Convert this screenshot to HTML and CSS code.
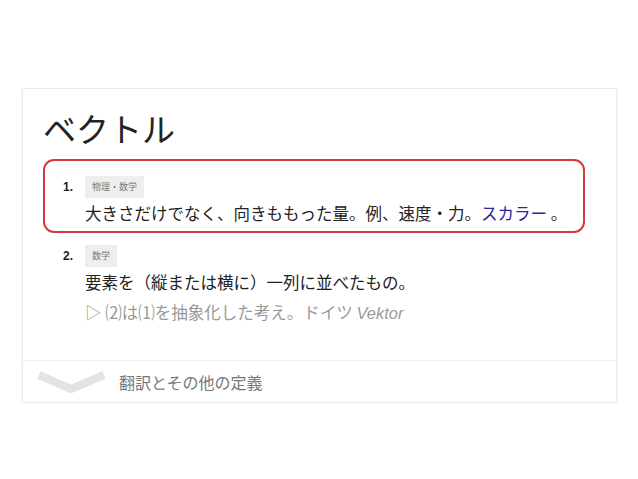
FILE: index.html
```html
<!DOCTYPE html>
<html>

<head>
    <title>ベクトル - 辞書</title>
    <link rel="stylesheet" href="styles.css">
</head>

<body>
    <div class="card">
        <div class="card-body">
            <h2 class="word">ベクトル</h2>
            <ol class="senses">
                <li class="sense highlight">
                    <span class="num">1.</span>
                    <div class="sense-body">
                        <span class="tag">物理・数学</span>
                        <p class="def">大きさだけでなく、向きももった量。例、速度・力。<a href="#">スカラー</a> 。</p>
                    </div>
                </li>
                <li class="sense">
                    <span class="num">2.</span>
                    <div class="sense-body">
                        <span class="tag">数学</span>
                        <p class="def">要素を（縦または横に）一列に並べたもの。</p>
                        <p class="note">▷ ⑵は⑴を抽象化した考え。ドイツ <i>Vektor</i></p>
                    </div>
                </li>
            </ol>
        </div>
        <div class="more">
            <svg class="chevron" width="70" height="26" viewBox="0 0 70 26">
                <polyline points="2,5 34,19 67,5" fill="none" stroke="#e3e3e3" stroke-width="8" stroke-linejoin="round" />
            </svg>
            <span>翻訳とその他の定義</span>
        </div>
    </div>
</body>

</html>
```

FILE: styles.css
```css
body {
    margin: 0;
    background-color: #fff;
    font-family: "Noto Sans CJK JP", "Liberation Sans", sans-serif;
    color: #222;
}

.card {
    margin: 88px 0 0 22px;
    width: 593px;
    border: 1px solid #ececec;
    box-shadow: 0 1px 2px rgba(0, 0, 0, 0.08);
}

.card-body {
    padding: 18px 31px 32px 20px;
}

.word {
    margin: 0;
    font-size: 33px;
    font-weight: normal;
    line-height: 42px;
    color: #222;
}

.senses {
    list-style: none;
    margin: 10px 0 0 0;
    padding: 0;
}

.sense {
    display: flex;
    padding: 0 0 0 20px;
}

.sense.highlight {
    margin-bottom: 12px;
    padding: 15px 0 3px 18px;
    border: 2.5px solid #d63a3c;
    border-radius: 11px;
}

.sense-body {
    display: flex;
    flex-direction: column;
    align-items: flex-start;
}

.num {
    width: 22px;
    padding-top: 3px;
    font-family: "Liberation Sans", sans-serif;
    font-size: 12px;
    font-weight: bold;
    line-height: 16px;
}

.tag {
    display: block;
    height: 22px;
    padding: 0 7px;
    background-color: #eee;
    color: #777;
    font-size: 9px;
    line-height: 22px;
}

.def,
.note {
    margin: 0;
    font-size: 16.5px;
    line-height: 30px;
}

.def a {
    color: #2b23a0;
    text-decoration: none;
}

.note {
    color: #999;
}

.note i {
    font-family: "Liberation Sans", sans-serif;
}

.more {
    display: flex;
    align-items: center;
    height: 41px;
    border-top: 1px solid #eee;
}

.chevron {
    margin: 2px 0 0 14px;
}

.more span {
    margin-left: 12px;
    color: #777;
    font-size: 16px;
}
```
